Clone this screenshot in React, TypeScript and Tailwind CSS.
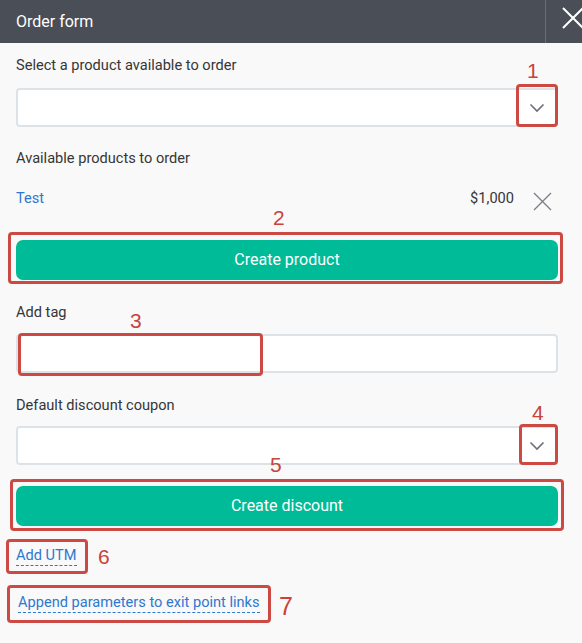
import React from "react";

function Chevron() {
  return (
    <svg width="16" height="10" viewBox="0 0 16 10" fill="none">
      <path d="M1.5 1.5 L8 8 L14.5 1.5" stroke="#6b6f75" strokeWidth="1.6" />
    </svg>
  );
}

function Select() {
  return (
    <div className="flex h-[39px] items-center justify-end rounded-[4px] border-2 border-[#dde2e7] bg-white pr-[11px]">
      <Chevron />
    </div>
  );
}

function Mark({ cls }: { cls: string }) {
  return <div className={"pointer-events-none absolute rounded-[4px] border-[3px] border-[#cc4a43] " + cls} />;
}

function Num({ cls, children }: { cls: string; children: React.ReactNode }) {
  return (
    <div
      className={"pointer-events-none absolute leading-none text-[#c9423b] " + cls}
      style={{ fontFamily: '"Liberation Sans", Arial, sans-serif' }}
    >
      {children}
    </div>
  );
}

export default function App() {
  return (
    <div
      className="relative h-[643px] w-[582px] overflow-hidden bg-[#f9f9fa] text-[#363636]"
      style={{ fontFamily: "Roboto, 'Noto Sans', sans-serif" }}
    >
      <div className="flex h-[43px] items-center bg-[#494e57]">
        <div className="flex-1 pl-4 text-[16px] text-white">Order form</div>
        <div className="relative h-full w-[37px] shrink-0 border-l border-[#6a6f77]">
          <svg className="absolute left-[16px] top-[7px]" width="22" height="22" viewBox="0 0 22 22" fill="none">
            <path d="M1 1 L21 21 M21 1 L1 21" stroke="#ffffff" strokeWidth="2" />
          </svg>
        </div>
      </div>

      <div className="flex flex-col pl-4 pr-6 text-[14.6px]">
        <div className="mt-3 leading-5">Select a product available to order</div>
        <div className="mt-[13px]">
          <Select />
        </div>
        <div className="mt-[21px] leading-5">Available products to order</div>
        <div className="mt-[21px] flex h-5 items-center">
          <span className="flex-1 text-[#2e78cf]">Test</span>
          <span>$1,000</span>
          <span className="ml-[19px] mr-[6px] mt-[4px]">
            <svg width="19" height="19" viewBox="0 0 19 19" fill="none">
              <path d="M1 1 L18 18 M18 1 L1 18" stroke="#7a7e84" strokeWidth="1.3" />
            </svg>
          </span>
        </div>
        <button className="mt-[31px] h-[40px] rounded-[7px] bg-[#00bb98] text-[16px] text-white">
          Create product
        </button>
        <div className="mt-[22px] leading-5">Add tag</div>
        <div className="mt-[12px] h-[39px] rounded-[4px] border-2 border-[#dde2e7] bg-white" />
        <div className="mt-[22px] leading-5">Default discount coupon</div>
        <div className="mt-[11px]">
          <Select />
        </div>
        <button className="mt-[21px] h-[40px] rounded-[7px] bg-[#00bb98] text-[16px] text-white">
          Create discount
        </button>
        <div className="mt-[20px] flex">
          <span className="border-b border-dashed border-[#2e78cf] leading-[19px] text-[#2e78cf]">Add UTM</span>
        </div>
        <div className="mt-[27px] flex pl-[2px]">
          <span className="border-b border-dashed border-[#2e78cf] leading-[19px] text-[#2e78cf]">
            Append parameters to exit point links
          </span>
        </div>
      </div>

      <Mark cls="left-[516px] top-[84px] h-[43px] w-[42px]" />
      <Num cls="left-[527px] top-[60px] text-[21px]">1</Num>
      <Mark cls="left-[8px] top-[232px] h-[52px] w-[555px]" />
      <Num cls="left-[273px] top-[207px] text-[21px]">2</Num>
      <Mark cls="left-[18px] top-[333px] h-[43px] w-[245px]" />
      <Num cls="left-[130px] top-[310px] text-[21px]">3</Num>
      <Mark cls="left-[519px] top-[424px] h-[41px] w-[39px]" />
      <Num cls="left-[532px] top-[402px] text-[21px]">4</Num>
      <Mark cls="left-[10px] top-[479px] h-[52px] w-[554px]" />
      <Num cls="left-[270px] top-[454px] text-[21px]">5</Num>
      <Mark cls="left-[6px] top-[539px] h-[35px] w-[82px]" />
      <Num cls="left-[98px] top-[546px] text-[21px]">6</Num>
      <Mark cls="left-[7px] top-[585px] h-[38px] w-[264px]" />
      <Num cls="left-[279px] top-[594px] text-[25px]">7</Num>
    </div>
  );
}
